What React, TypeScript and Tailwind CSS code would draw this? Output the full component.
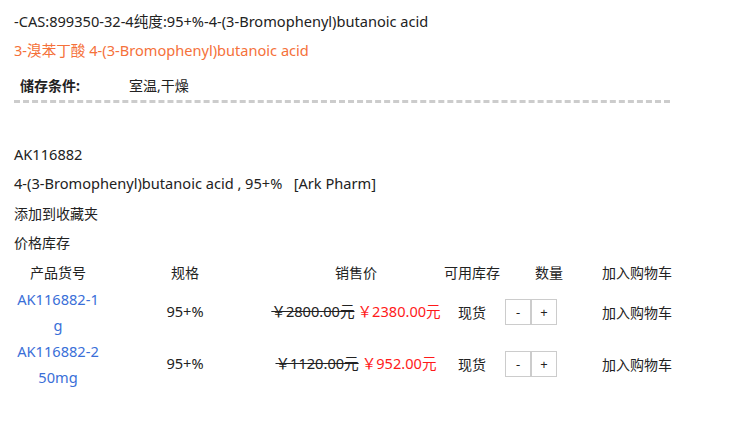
const rows = [
  { code: "AK116882-1g", spec: "95+%", old: "￥2800.00元", price: "￥2380.00元" },
  { code: "AK116882-250mg", spec: "95+%", old: "￥1120.00元", price: "￥952.00元" },
];

const font = "font-['Segoe_UI','Noto_Sans','Noto_Sans_CJK_SC',sans-serif]";

export default function App() {
  return (
    <div className={`${font} bg-white text-[#222] w-[737px] h-[433px] px-[14px] pt-[10px]`}>
      <p className="text-[14.6px] leading-[22px]">-CAS:899350-32-4纯度:95+%-4-(3-Bromophenyl)butanoic acid</p>
      <p className="text-[14.6px] leading-[22px] mt-[7px] text-[#f5713a]">3-溴苯丁酸 4-(3-Bromophenyl)butanoic acid</p>
      <div className="w-[656px] border-b-[3px] border-dashed border-[#cccccc] mt-[16px] pb-[5px] flex text-[14px] leading-[18px]">
        <span className="font-bold pl-[6px] w-[115px]">储存条件:</span>
        <span>室温,干燥</span>
      </div>
      <p className="text-[14.6px] leading-[22px] mt-[40px]">AK116882</p>
      <p className="text-[14.6px] leading-[22px] mt-[7px]">
        4-(3-Bromophenyl)butanoic acid , 95+%&nbsp;&nbsp;&nbsp;[Ark Pharm]
      </p>
      <p className="text-[14px] leading-[20px] mt-[10px]">添加到收藏夹</p>
      <p className="text-[14px] leading-[20px] mt-[9px]">价格库存</p>
      <div className="w-[662px] text-[14px] mt-[10px]">
        <div className="grid grid-cols-[88px_166px_176px_56px_98px_78px] text-center leading-[20px] mb-[3px]">
          <span>产品货号</span>
          <span>规格</span>
          <span>销售价</span>
          <span>可用库存</span>
          <span>数量</span>
          <span>加入购物车</span>
        </div>
        {rows.map((r) => (
          <div
            key={r.code}
            className="grid grid-cols-[88px_166px_176px_56px_98px_78px] items-center text-center h-[52px]"
          >
            <a className="text-[#3a6fd8] text-[14.6px] leading-[26px] break-all px-[2px] cursor-pointer">{r.code}</a>
            <span className="text-[14.6px]">{r.spec}</span>
            <span className="text-[14.6px] whitespace-nowrap">
              <span className="line-through">{r.old}</span>
              <span className="text-[#ff1a1a] ml-[3px]">{r.price}</span>
            </span>
            <span>现货</span>
            <span className="flex justify-start pl-[5px]">
              <button className="w-[26px] h-[26px] border border-[#cccccc] bg-white text-[13px] leading-none">-</button>
              <button className="w-[26px] h-[26px] border border-[#cccccc] bg-white text-[13px] leading-none">+</button>
            </span>
            <span>加入购物车</span>
          </div>
        ))}
      </div>
    </div>
  );
}
